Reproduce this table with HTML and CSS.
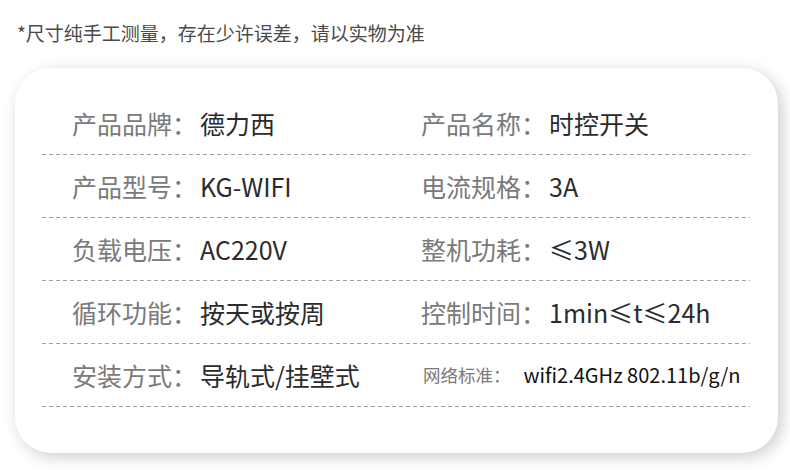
FILE: index.html
```html
<!DOCTYPE html>
<html lang="zh-CN">
<head>
<meta charset="utf-8">
<link rel="stylesheet" href="styles.css">
</head>
<body>
<p class="note">*尺寸纯手工测量，存在少许误差，请以实物为准</p>
<div class="card">
  <div class="row">
    <div class="cell"><span class="label">产品品牌：</span><span class="value">德力西</span></div>
    <div class="cell"><span class="label">产品名称：</span><span class="value">时控开关</span></div>
  </div>
  <div class="row">
    <div class="cell"><span class="label">产品型号：</span><span class="value">KG-WIFI</span></div>
    <div class="cell"><span class="label">电流规格：</span><span class="value">3A</span></div>
  </div>
  <div class="row">
    <div class="cell"><span class="label">负载电压：</span><span class="value">AC220V</span></div>
    <div class="cell"><span class="label">整机功耗：</span><span class="value">≤3W</span></div>
  </div>
  <div class="row">
    <div class="cell"><span class="label">循环功能：</span><span class="value">按天或按周</span></div>
    <div class="cell"><span class="label">控制时间：</span><span class="value">1min≤t≤24h</span></div>
  </div>
  <div class="row">
    <div class="cell"><span class="label">安装方式：</span><span class="value">导轨式/挂壁式</span></div>
    <div class="cell small"><span class="label">网络标准：</span><span class="value">wifi2.4GHz 802.11b/g/n</span></div>
  </div>
</div>
</body>
</html>
```
FILE: styles.css
```css
html, body {
  margin: 0;
  padding: 0;
  background: #ffffff;
  width: 790px;
  height: 470px;
  overflow: hidden;
  font-family: "Noto Sans CJK SC", "Noto Sans", sans-serif;
}

.note {
  margin: 0;
  padding: 22px 0 0 17px;
  font-size: 19px;
  line-height: 22px;
  color: #4a4a4a;
}

.card {
  margin: 24px 0 0 15px;
  width: 763px;
  height: 385px;
  box-sizing: border-box;
  padding: 24px 28px 0 27px;
  background: #ffffff;
  border-radius: 36px;
  box-shadow: 4px 4px 16px rgba(0, 0, 0, 0.2);
}

.row {
  display: grid;
  grid-template-columns: 349px 1fr;
  align-items: center;
  height: 63px;
  box-sizing: border-box;
  padding: 0 0 1px 30px;
  background: repeating-linear-gradient(90deg, #a0a0a0 0 4px, transparent 4px 7px) left bottom / 100% 1px no-repeat;
}

.cell {
  display: flex;
  align-items: center;
  white-space: nowrap;
  font-size: 25px;
  line-height: 30px;
}

.label {
  color: #7a7a7a;
  margin-right: 3px;
}

.value {
  color: #2b2b2b;
}

.cell.small .label {
  font-size: 17.5px;
  margin-left: 2px;
  margin-right: 13px;
}

.cell.small .value {
  font-size: 20px;
  color: #111111;
}
```
